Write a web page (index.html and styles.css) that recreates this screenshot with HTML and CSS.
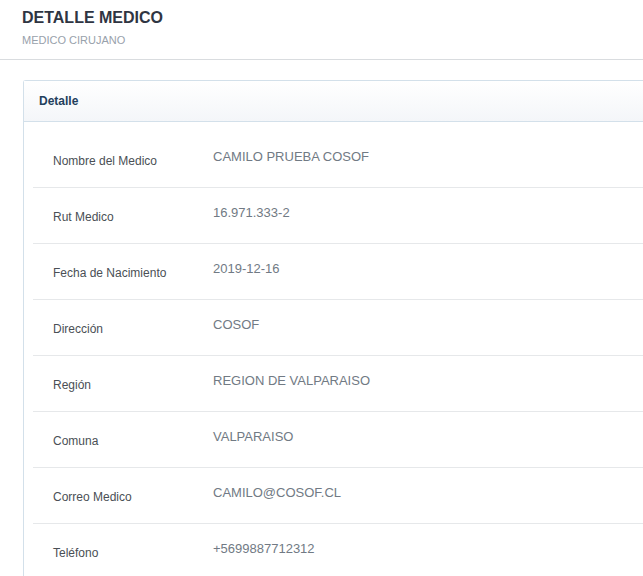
FILE: index.html
```html
<!DOCTYPE html>
<html lang="es">
<head>
<meta charset="utf-8">
<title>Detalle Medico</title>
<link rel="stylesheet" href="styles.css">
</head>
<body>
<header class="page-header">
  <h1 class="page-title">DETALLE MEDICO</h1>
  <div class="page-subtitle">MEDICO CIRUJANO</div>
</header>
<main class="content">
  <section class="card">
    <div class="card-header">Detalle</div>
    <div class="card-body">
      <div class="row"><div class="label">Nombre del Medico</div><div class="value">CAMILO PRUEBA COSOF</div></div>
      <div class="row"><div class="label">Rut Medico</div><div class="value">16.971.333-2</div></div>
      <div class="row"><div class="label">Fecha de Nacimiento</div><div class="value">2019-12-16</div></div>
      <div class="row"><div class="label">Dirección</div><div class="value">COSOF</div></div>
      <div class="row"><div class="label">Región</div><div class="value">REGION DE VALPARAISO</div></div>
      <div class="row"><div class="label">Comuna</div><div class="value">VALPARAISO</div></div>
      <div class="row"><div class="label">Correo Medico</div><div class="value">CAMILO@COSOF.CL</div></div>
      <div class="row"><div class="label">Teléfono</div><div class="value">+5699887712312</div></div>
    </div>
  </section>
</main>
</body>
</html>
```
FILE: styles.css
```css
html, body {
  margin: 0;
  padding: 0;
  overflow: hidden;
  background: #ffffff;
  font-family: "Liberation Sans", Arial, sans-serif;
}

.page-header {
  padding: 8px 0 12px 22px;
  border-bottom: 1px solid #d9dcdf;
}

.page-title {
  margin: 0;
  font-size: 16px;
  line-height: 20px;
  font-weight: bold;
  color: #2f3542;
}

.page-subtitle {
  margin-top: 5px;
  font-size: 11px;
  line-height: 14px;
  color: #98a1ab;
}

.content {
  padding: 20px 0 0 23px;
}

.card {
  border: 1px solid #d3e0ea;
  border-right: none;
  border-radius: 3px 0 0 0;
  background: #ffffff;
}

.card-header {
  height: 16px;
  padding: 12px 15px;
  font-size: 12px;
  line-height: 16px;
  font-weight: bold;
  color: #233f5c;
  background: linear-gradient(#ffffff, #f4f6f9);
  border-bottom: 1px solid #d3e0ea;
}

.card-body {
  padding: 10px 0 0 9px;
}

.row {
  display: grid;
  grid-template-columns: 180px 1fr;
  height: 55px;
  border-bottom: 1px solid #e6e8ea;
}

.label {
  padding: 21px 0 0 20px;
  font-size: 12px;
  line-height: 16px;
  color: #4a4f55;
}

.value {
  padding-top: 16px;
  font-size: 13px;
  line-height: 18px;
  color: #717a84;
}
```
